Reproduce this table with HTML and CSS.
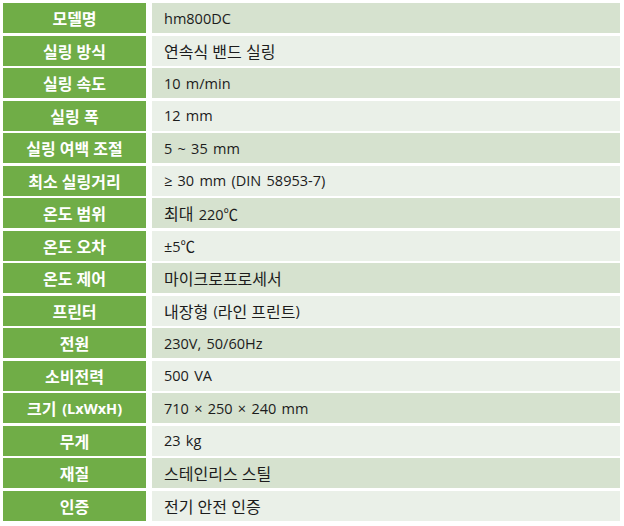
FILE: index.html
```html
<!DOCTYPE html>
<html lang="ko">
<head>
<meta charset="utf-8">
<title>hm800DC 사양</title>
<link rel="stylesheet" href="styles.css">
</head>
<body>
<div class="spec">
  <div class="k"><span class="ko">모델명</span></div><div class="v odd">hm800DC</div>
  <div class="k"><span class="ko">실링 방식</span></div><div class="v"><span class="ko">연속식 밴드 실링</span></div>
  <div class="k"><span class="ko">실링 속도</span></div><div class="v odd">10 m/min</div>
  <div class="k"><span class="ko">실링 폭</span></div><div class="v">12 mm</div>
  <div class="k"><span class="ko">실링 여백 조절</span></div><div class="v odd">5 ~ 35 mm</div>
  <div class="k"><span class="ko">최소 실링거리</span></div><div class="v">≥ 30 mm (DIN 58953-7)</div>
  <div class="k"><span class="ko">온도 범위</span></div><div class="v odd"><span class="ko">최대</span> 220℃</div>
  <div class="k"><span class="ko">온도 오차</span></div><div class="v">±5℃</div>
  <div class="k"><span class="ko">온도 제어</span></div><div class="v odd"><span class="ko">마이크로프로세서</span></div>
  <div class="k"><span class="ko">프린터</span></div><div class="v"><span class="ko">내장형</span> (<span class="ko">라인 프린트</span>)</div>
  <div class="k"><span class="ko">전원</span></div><div class="v odd">230V, 50/60Hz</div>
  <div class="k"><span class="ko">소비전력</span></div><div class="v">500 VA</div>
  <div class="k"><span class="ko">크기</span> (LxWxH)</div><div class="v odd">710 × 250 × 240 mm</div>
  <div class="k"><span class="ko">무게</span></div><div class="v">23 kg</div>
  <div class="k"><span class="ko">재질</span></div><div class="v odd"><span class="ko">스테인리스 스틸</span></div>
  <div class="k"><span class="ko">인증</span></div><div class="v"><span class="ko">전기 안전 인증</span></div>
</div>
</body>
</html>
```
FILE: styles.css
```css
html, body {
  margin: 0;
  padding: 0;
  background: #ffffff;
}
.spec {
  display: grid;
  grid-template-columns: 143px 468px;
  grid-auto-rows: 30px;
  column-gap: 6px;
  row-gap: 2.5px;
  padding: 3px 0 0 3px;
  font-family: "Open Sans", "Noto Sans CJK KR", sans-serif;
  font-size: 14.5px;
}
.ko {
  font-size: 16px;
  word-spacing: 0;
}
.k {
  background: #70ad47;
  color: #ffffff;
  font-weight: bold;
  display: flex;
  align-items: center;
  justify-content: center;
  white-space: pre;
  word-spacing: 2px;
}
.v {
  background: #eaf0e8;
  color: #1c1c1c;
  display: flex;
  align-items: center;
  padding-left: 12px;
  white-space: pre;
  word-spacing: 1.5px;
}
.v.odd {
  background: #d6e2cf;
}
```
